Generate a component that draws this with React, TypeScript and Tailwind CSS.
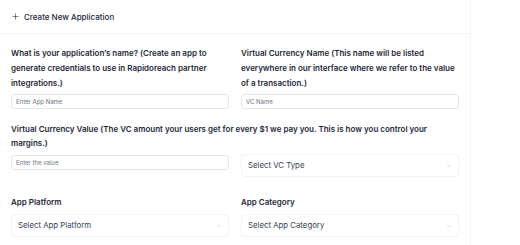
import { Plus, ChevronDown } from "lucide-react";

const SelectBox = ({ label }: { label: string }) => (
  <div className="flex h-[23px] w-full items-center justify-between rounded-[4px] border border-gray-100 bg-white px-[6px] shadow-[0_0_1px_rgba(0,0,0,0.06)]">
    <span className="text-[7.8px] text-gray-700">{label}</span>
    <ChevronDown className="h-[6px] w-[6px] text-gray-400" strokeWidth={1.5} />
  </div>
);

const TextInput = ({ placeholder }: { placeholder: string }) => (
  <div className="flex h-[15px] w-full items-center rounded-[3px] border border-gray-200 bg-white px-[4px]">
    <span className="text-[6px] text-gray-500">{placeholder}</span>
  </div>
);

export default function App() {
  return (
    <div
      className="flex h-[245px] w-[520px] bg-white"
      style={{ fontFamily: "Inter, 'Noto Sans', sans-serif" }}
    >
      <div className="flex w-[471px] flex-col border-r border-gray-100">
        <div className="flex h-[34px] items-center gap-[4px] border-b border-gray-100 px-[11px]">
          <Plus className="h-[9px] w-[9px] text-gray-800" strokeWidth={1.5} />
          <span className="text-[8px] font-medium text-gray-800">Create New Application</span>
        </div>

        <div className="flex flex-col px-[11px] pt-[12px]">
          <div className="grid grid-cols-2 gap-x-[12px]">
            <div className="flex flex-col gap-[3px]">
              <p className="text-[8px] font-semibold leading-[15px] text-gray-800">
                What is your application’s name? (Create an app to generate credentials to use in
                Rapidoreach partner integrations.)
              </p>
              <TextInput placeholder="Enter App Name" />
            </div>
            <div className="flex flex-col gap-[3px]">
              <p className="text-[8px] font-semibold leading-[15px] text-gray-800">
                Virtual Currency Name (This name will be listed everywhere in our interface where we
                refer to the value of a transaction.)
              </p>
              <TextInput placeholder="VC Name" />
            </div>
          </div>

          <p className="mt-[13px] w-[440px] text-[8px] font-semibold leading-[14px] text-gray-800">
            Virtual Currency Value (The VC amount your users get for every $1 we pay you. This is
            how you control your margins.)
          </p>
          <div className="mt-[4px] grid grid-cols-2 items-start gap-x-[12px]">
            <div className="pt-[1px]">
              <TextInput placeholder="Enter the value" />
            </div>
            <SelectBox label="Select VC Type" />
          </div>

          <div className="mt-[18px] grid grid-cols-2 gap-x-[12px]">
            <div className="flex flex-col gap-[4px]">
              <p className="text-[8px] font-semibold leading-[15px] text-gray-800">App Platform</p>
              <SelectBox label="Select App Platform" />
            </div>
            <div className="flex flex-col gap-[4px]">
              <p className="text-[8px] font-semibold leading-[15px] text-gray-800">App Category</p>
              <SelectBox label="Select App Category" />
            </div>
          </div>
        </div>
      </div>
    </div>
  );
}
